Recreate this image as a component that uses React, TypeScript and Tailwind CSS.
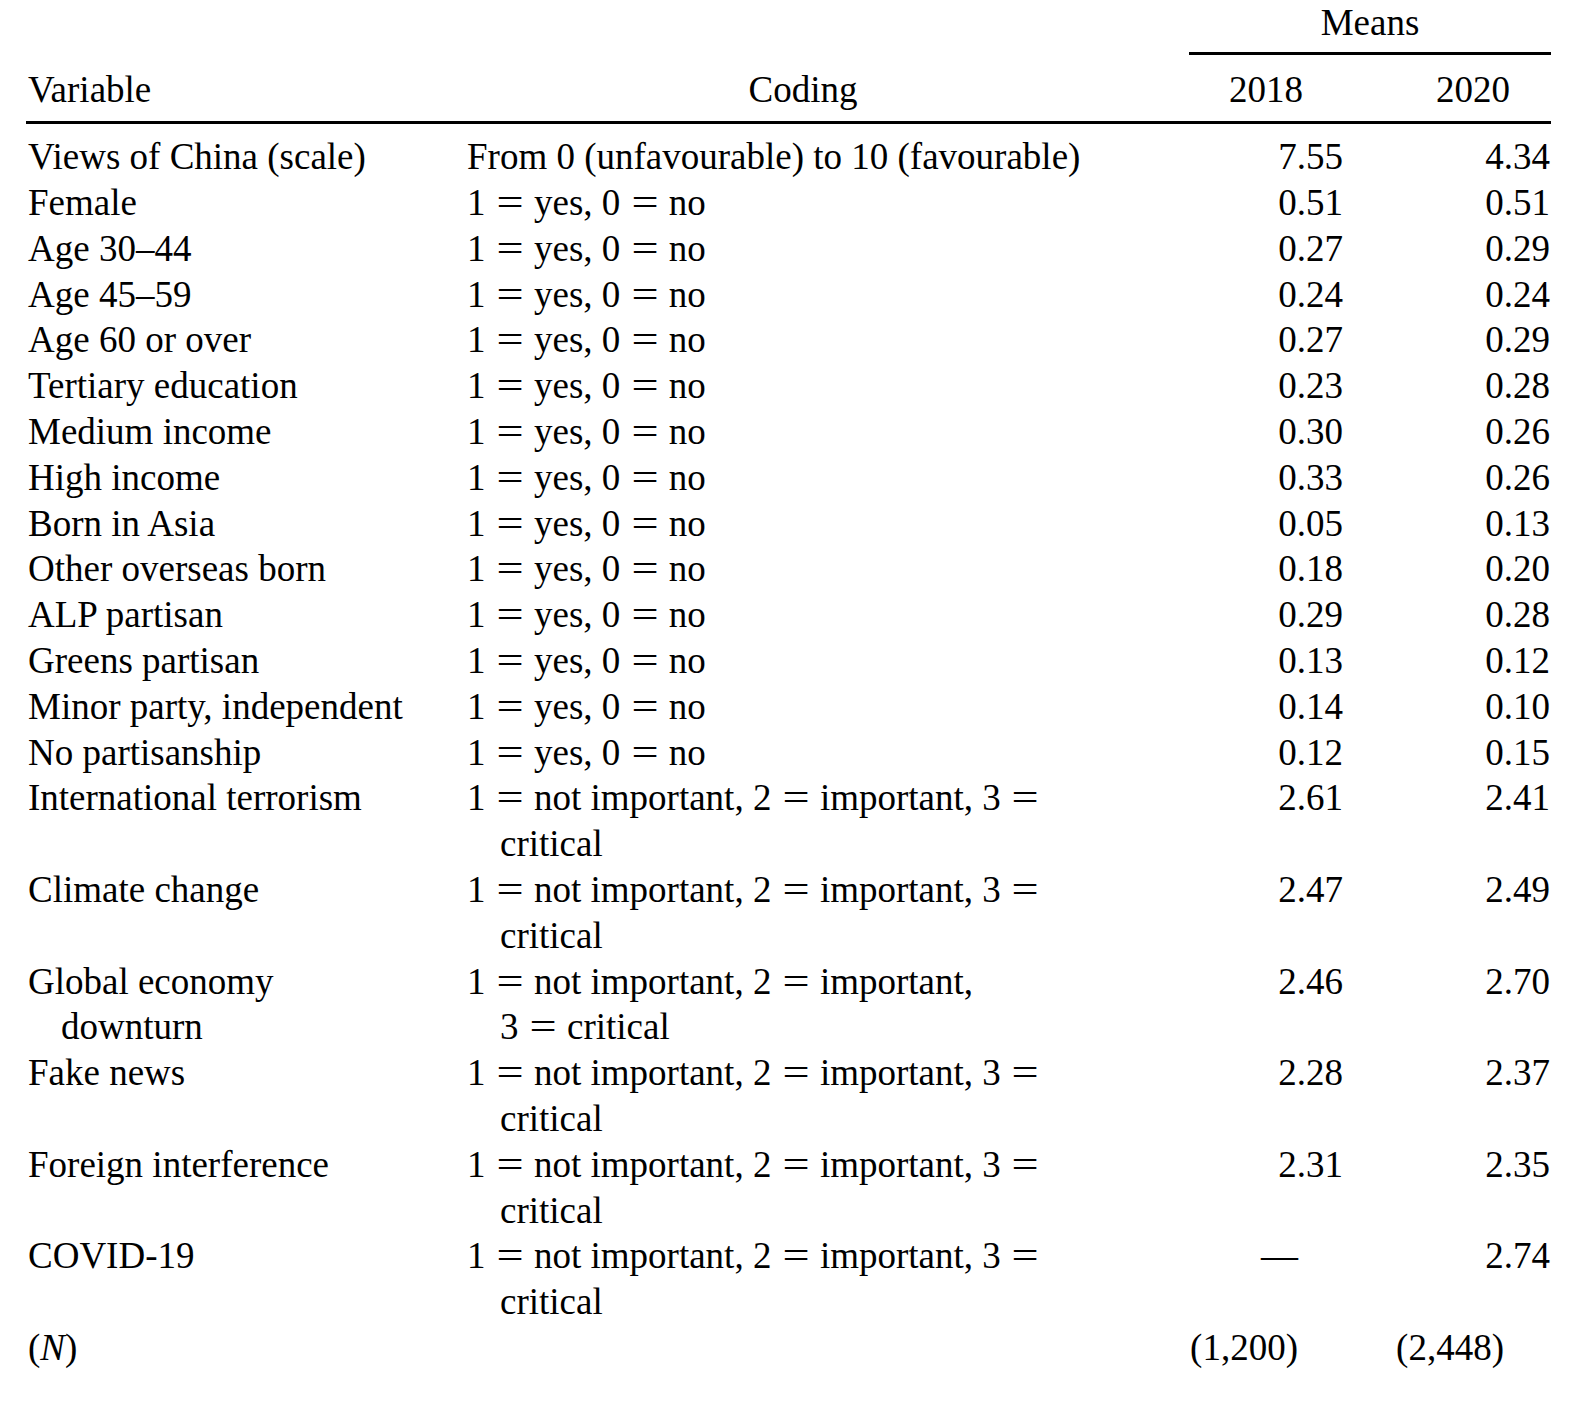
const rows: { v: string[]; c: string[]; a: string; b: string }[] = [
  { v: ['Views of China (scale)'], c: ['From 0 (unfavourable) to 10 (favourable)'], a: '7.55', b: '4.34' },
  { v: ['Female'], c: ['1 = yes, 0 = no'], a: '0.51', b: '0.51' },
  { v: ['Age 30–44'], c: ['1 = yes, 0 = no'], a: '0.27', b: '0.29' },
  { v: ['Age 45–59'], c: ['1 = yes, 0 = no'], a: '0.24', b: '0.24' },
  { v: ['Age 60 or over'], c: ['1 = yes, 0 = no'], a: '0.27', b: '0.29' },
  { v: ['Tertiary education'], c: ['1 = yes, 0 = no'], a: '0.23', b: '0.28' },
  { v: ['Medium income'], c: ['1 = yes, 0 = no'], a: '0.30', b: '0.26' },
  { v: ['High income'], c: ['1 = yes, 0 = no'], a: '0.33', b: '0.26' },
  { v: ['Born in Asia'], c: ['1 = yes, 0 = no'], a: '0.05', b: '0.13' },
  { v: ['Other overseas born'], c: ['1 = yes, 0 = no'], a: '0.18', b: '0.20' },
  { v: ['ALP partisan'], c: ['1 = yes, 0 = no'], a: '0.29', b: '0.28' },
  { v: ['Greens partisan'], c: ['1 = yes, 0 = no'], a: '0.13', b: '0.12' },
  { v: ['Minor party, independent'], c: ['1 = yes, 0 = no'], a: '0.14', b: '0.10' },
  { v: ['No partisanship'], c: ['1 = yes, 0 = no'], a: '0.12', b: '0.15' },
  { v: ['International terrorism'], c: ['1 = not important, 2 = important, 3 =', 'critical'], a: '2.61', b: '2.41' },
  { v: ['Climate change'], c: ['1 = not important, 2 = important, 3 =', 'critical'], a: '2.47', b: '2.49' },
  { v: ['Global economy', 'downturn'], c: ['1 = not important, 2 = important,', '3 = critical'], a: '2.46', b: '2.70' },
  { v: ['Fake news'], c: ['1 = not important, 2 = important, 3 =', 'critical'], a: '2.28', b: '2.37' },
  { v: ['Foreign interference'], c: ['1 = not important, 2 = important, 3 =', 'critical'], a: '2.31', b: '2.35' },
  { v: ['COVID-19'], c: ['1 = not important, 2 = important, 3 =', 'critical'], a: '—', b: '2.74' },
];

// math-style equals sign: wider than the text font's glyph
function Eq({ text }: { text: string }) {
  const parts = text.split('=');
  return (
    <>
      {parts.map((p, i) => (
        <span key={i}>
          {p}
          {i < parts.length - 1 && (
            <span className="inline-block w-[30px] indent-0 text-center scale-x-[1.3]">=</span>
          )}
        </span>
      ))}
    </>
  );
}

function Lines({ lines }: { lines: string[] }) {
  return (
    <div className="pl-[33px] -indent-[33px]">
      {lines.map((l, i) => (
        <span key={i}>
          <Eq text={l} />
          {i < lines.length - 1 && <br />}
        </span>
      ))}
    </div>
  );
}

export default function App() {
  const grid = 'grid grid-cols-[440px_674px_203px_208px]';
  return (
    <div className="min-h-[1402px] w-[1574px] bg-white text-black font-['Liberation_Serif','Times_New_Roman',serif] text-[37px] leading-[45.8px]">
      <div className="ml-[26px] w-[1525px]">
        <div className={grid}>
          <div className="col-start-3 col-span-2 ml-[49px] border-b-[3px] border-black pb-[6px] text-center">
            Means
          </div>
        </div>
        <div className={`${grid} border-b-[3.5px] border-black pt-[12.5px] pb-[7.5px]`}>
          <div className="pl-[2px]">Variable</div>
          <div className="text-center">Coding</div>
          <div className="text-right pr-[40px]">2018</div>
          <div className="text-right pr-[41px]">2020</div>
        </div>
        <div className="pt-[10.7px]">
          {rows.map((r, i) => (
            <div key={i} className={grid}>
              <div className="pl-[2px]">
                <Lines lines={r.v} />
              </div>
              <div className="pl-[1px]">
                <Lines lines={r.c} />
              </div>
              <div className={r.a === '—' ? 'text-right pr-[45px]' : 'text-right'}>{r.a}</div>
              <div className="text-right pr-[1px]">{r.b}</div>
            </div>
          ))}
          <div className={grid}>
            <div className="pl-[2px]">
              (<span className="italic">N</span>)
            </div>
            <div />
            <div className="text-right pr-[45px]">(1,200)</div>
            <div className="text-right pr-[47px]">(2,448)</div>
          </div>
        </div>
      </div>
    </div>
  );
}
